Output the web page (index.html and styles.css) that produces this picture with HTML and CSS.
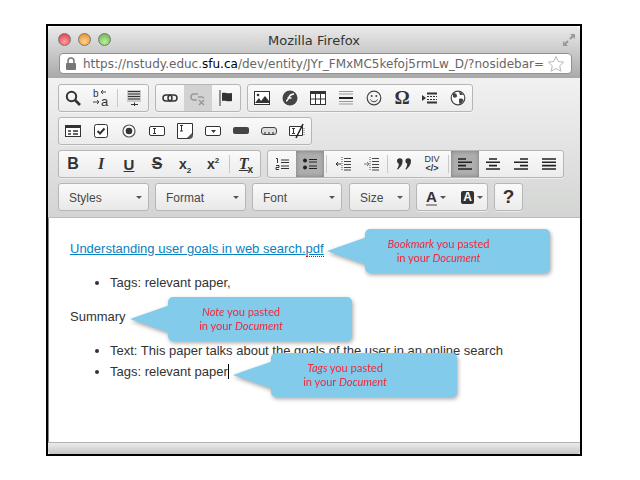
FILE: index.html
```html
<!DOCTYPE html>
<html lang="en">
<head>
    <meta charset="UTF-8">
    <title>Mozilla Firefox</title>
    <link rel="stylesheet" href="styles.css">
</head>
<body>

    <div class="window">
        <div class="chrome">
            <div class="titlebar">
                <div class="lights">
                    <span class="light red"></span>
                    <span class="light orange"></span>
                    <span class="light green"></span>
                </div>
                <span class="title">Mozilla Firefox</span>
                <svg class="resize" width="16" height="16" viewBox="0 0 16 16"><path d="M9 2h5v5l-1.700-1.700-2.500 2.500-1.600-1.600 2.500-2.500zM7 14H2V9l1.700 1.700 2.500-2.500 1.600 1.600-2.500 2.500z" fill="#9a9a9a"/></svg>
            </div>
            <div class="urlbar">
                <svg class="lock" width="12" height="14" viewBox="0 0 12 14"><path d="M3 6V4a3 3 0 0 1 6 0v2" fill="none" stroke="#777" stroke-width="1.500"/><rect x="1" y="6" width="10" height="7" rx="1" fill="#777"/></svg>
                <span class="url">https://nstudy.educ.<b>sfu.ca</b>/dev/entity/JYr_FMxMC5kefoj5rmLw_D/?nosidebar=</span>
                <svg width="18" height="18" viewBox="0 0 18 18"><path d="M9 1.500l2.300 5 5.400.6-4 3.700 1.100 5.400L9 13.500l-4.800 2.700 1.100-5.400-4-3.700 5.400-.6z" fill="#fff" stroke="#b8b8b8"/></svg>
            </div>
        </div>

        <div class="toolbar">
            <div class="row">
                <div class="group">
                    <span class="btn"><svg width="18" height="18" viewBox="0 0 18 18"><circle cx="7.500" cy="7.500" r="4.700" fill="none" stroke="#333" stroke-width="2"/><path d="M11 11l5 5" stroke="#333" stroke-width="2.600"/></svg></span>
                    <span class="btn"><svg width="18" height="20" viewBox="0 0 18 20"><text x="1" y="9" class="svg-text">b</text><text x="9" y="18" class="svg-text big">a</text><path d="M9 4h5M11 2L9 4l2 2M1 14h6M5 12l2 2-2 2" fill="none" stroke="#444"/></svg></span>
                    <span class="sep"></span>
                    <span class="btn"><svg width="16" height="18" viewBox="0 0 16 18"><rect x="1" y="1" width="14" height="12" fill="#ccc"/><path d="M2 2.500h12M2 5h12M2 7.500h12M2 10h12" stroke="#333" stroke-width="1.200"/><path d="M5 15.500h7M8.500 13.500v3.500" stroke="#333"/></svg></span>
                </div>
                <div class="group">
                    <span class="btn"><svg width="16" height="16" viewBox="0 0 16 16"><rect x="1" y="5" width="9" height="6" rx="3" fill="none" stroke="#333" stroke-width="1.500"/><rect x="6" y="5" width="9" height="6" rx="3" fill="none" stroke="#333" stroke-width="1.500"/></svg></span>
                    <span class="btn on light-on"><svg width="16" height="16" viewBox="0 0 16 16"><path d="M8 4H4a3 3 0 0 0 0 6h3M8 7h4a3 3 0 0 1 2 1" fill="none" stroke="#999" stroke-width="1.500"/><path d="M9 10l5 5M14 10l-5 5" stroke="#999" stroke-width="1.500"/></svg></span>
                    <span class="btn"><svg width="16" height="16" viewBox="0 0 16 16"><path d="M2 0v16" stroke="#333"/><path d="M4 3c3-1 5 1 10 0v8c-5 1-7-1-10 0z" fill="#333"/></svg></span>
                </div>
                <div class="group">
                    <span class="btn"><svg width="16" height="14" viewBox="0 0 16 14"><rect x=".5" y=".5" width="15" height="13" fill="#fff" stroke="#333"/><circle cx="4" cy="4" r="1.300" fill="#333"/><path d="M1 12l4-5 2 3 4-5 4 5v2H1z" fill="#333"/></svg></span>
                    <span class="btn"><svg width="16" height="16" viewBox="0 0 16 16"><circle cx="8" cy="8" r="7.500" fill="#444"/><path d="M4 11c2 0 2-2 3-4s2-3 5-3M5.500 8h4" fill="none" stroke="#fff" stroke-width="1.500"/></svg></span>
                    <span class="btn"><svg width="16" height="14" viewBox="0 0 16 14"><rect x=".5" y=".5" width="15" height="13" fill="#fff" stroke="#333"/><rect x="0" y="0" width="16" height="3" fill="#333"/><path d="M5.500 3v10M10.500 3v10M1 8h14" stroke="#333"/></svg></span>
                    <span class="btn"><svg width="14" height="16" viewBox="0 0 14 16"><path d="M0 1.500h14M0 4h14M0 11.500h14M0 14h14" stroke="#999"/><path d="M0 8h14" stroke="#222" stroke-width="2"/></svg></span>
                    <span class="btn"><svg width="16" height="16" viewBox="0 0 16 16"><circle cx="8" cy="8" r="6.800" fill="none" stroke="#444" stroke-width="1.200"/><circle cx="5.700" cy="6" r="1" fill="#444"/><circle cx="10.300" cy="6" r="1" fill="#444"/><path d="M4.500 9.500c1.500 3 5.500 3 7 0" fill="none" stroke="#444"/></svg></span>
                    <span class="btn omega">Ω</span>
                    <span class="btn"><svg width="16" height="12" viewBox="0 0 16 12"><path d="M0 3l4 3-4 3z" fill="#333"/><path d="M5 1.500h10M5 10.500h10" stroke="#333" stroke-width="2"/><path d="M5 4.500h10M5 7.500h10" stroke="#333" stroke-dasharray="2 1"/></svg></span>
                    <span class="btn"><svg width="16" height="16" viewBox="0 0 16 16"><circle cx="8" cy="8" r="6.800" fill="#fff" stroke="#444" stroke-width="1.200"/><path d="M3 3c3 0 4 1 4 3S4 8 3 7zM9 9c3-1 5 0 4 2s-2 3-3 3-1-3-1-5zM9 2c2 0 3 1 4 3l-3 0z" fill="#444"/></svg></span>
                </div>
            </div>

            <div class="row">
                <div class="group">
                    <span class="btn"><svg width="16" height="12" viewBox="0 0 16 12"><rect x=".5" y=".5" width="15" height="11" fill="#fff" stroke="#333"/><rect x="0" y="0" width="16" height="3" fill="#333"/><path d="M3 6h3M3 9h3M8 6h5M8 9h5" stroke="#333" stroke-width="1.300"/></svg></span>
                    <span class="btn"><svg width="14" height="14" viewBox="0 0 14 14"><rect x=".5" y=".5" width="13" height="13" rx="2" fill="#fff" stroke="#333"/><path d="M3.500 7l2.500 2.500 4.500-5" fill="none" stroke="#333" stroke-width="2"/></svg></span>
                    <span class="btn"><svg width="14" height="14" viewBox="0 0 14 14"><circle cx="7" cy="7" r="6" fill="#fff" stroke="#555" stroke-width="1.200"/><circle cx="7" cy="7" r="3.300" fill="#333"/></svg></span>
                    <span class="btn"><svg width="16" height="12" viewBox="0 0 16 12"><rect x=".5" y="1.500" width="15" height="9" rx="1.500" fill="#fff" stroke="#333"/><path d="M4 3.500h3M4 8.500h3M5.500 3.500v5" stroke="#333"/></svg></span>
                    <span class="btn"><svg width="16" height="16" viewBox="0 0 16 16"><path d="M.5.500h15v12a3 3 0 0 1-3 3H.5z" fill="#fff" stroke="#333"/><path d="M3 2.500h3M3 8h3M4.500 2.500V8" stroke="#333"/><path d="M15 10v5h-5z" fill="#555"/></svg></span>
                    <span class="btn"><svg width="16" height="12" viewBox="0 0 16 12"><rect x=".5" y="1.500" width="15" height="9" rx="1.500" fill="#fff" stroke="#333"/><path d="M6 5h5l-2.500 3z" fill="#333"/></svg></span>
                    <span class="btn"><svg width="16" height="8" viewBox="0 0 16 8"><rect x="0" y="0" width="16" height="7" rx="2" fill="#444"/></svg></span>
                    <span class="btn"><svg width="16" height="10" viewBox="0 0 16 10"><rect x=".5" y="1.500" width="15" height="7" rx="2.500" fill="#ddd" stroke="#444"/><path d="M3 7h2M7 7h2M11 7h2" stroke="#222"/></svg></span>
                    <span class="btn"><svg width="16" height="16" viewBox="0 0 16 16"><path d="M.5 3.500h13v9H.5z" fill="#fff" stroke="#333"/><path d="M3 5.500h3M3 10.500h3M4.500 5.500v5" stroke="#333"/><path d="M14 1L7 15" stroke="#222" stroke-width="1.500"/><path d="M15 5v8" stroke="#777" stroke-dasharray="1 1"/></svg></span>
                </div>
            </div>

            <div class="row">
                <div class="group">
                    <span class="btn fmt bold">B</span>
                    <span class="btn fmt italic">I</span>
                    <span class="btn fmt under">U</span>
                    <span class="btn fmt strike">S</span>
                    <span class="btn fmt script"><span>x<sub>2</sub></span></span>
                    <span class="btn fmt script"><span>x<sup>2</sup></span></span>
                    <span class="sep"></span>
                    <span class="btn fmt clear"><span><i>T</i><sub>x</sub></span></span>
                </div>
                <div class="group">
                    <span class="btn"><svg width="14" height="14" viewBox="0 0 14 14"><path d="M1 1.500h1.500V6M1 8.500h3v2H1v2h3" fill="none" stroke="#333"/><path d="M6 3h8M6 5.500h8M6 9h8M6 11.500h8" stroke="#333" stroke-width="1.200"/></svg></span>
                    <span class="btn on"><svg width="14" height="14" viewBox="0 0 14 14"><circle cx="2" cy="3.500" r="2" fill="#222"/><circle cx="2" cy="10.500" r="2" fill="#222"/><path d="M6 2.500h8M6 5h8M6 9h8M6 11.500h8" stroke="#222" stroke-width="1.200"/></svg></span>
                    <span class="sep"></span>
                    <span class="btn"><svg width="16" height="14" viewBox="0 0 16 14"><path d="M9 1.500h7M9 4.500h7M9 7.500h7M9 10.500h7M9 13h7" stroke="#444"/><path d="M7 0v14" stroke="#555" stroke-dasharray="1 1"/><path d="M1 7h5M1 7l2-2M1 7l2 2" fill="none" stroke="#333"/></svg></span>
                    <span class="btn"><svg width="16" height="14" viewBox="0 0 16 14"><path d="M9 1.500h7M9 4.500h7M9 7.500h7M9 10.500h7M9 13h7" stroke="#444"/><path d="M7 0v14" stroke="#555" stroke-dasharray="1 1"/><path d="M1 7h5M6 7L4 5M6 7L4 9" fill="none" stroke="#777"/></svg></span>
                    <span class="sep"></span>
                    <span class="btn"><svg width="16" height="12" viewBox="0 0 16 12"><path d="M1 3a2.800 2.800 0 1 1 5.600 0c0 3.500-2 6-4.600 8.500L1 11c1.200-1.800 1.800-3.500 1.800-5.300A2.800 2.800 0 0 1 1 3zM9.400 3a2.800 2.800 0 1 1 5.600 0c0 3.500-2 6-4.600 8.500l-1-.5c1.200-1.800 1.800-3.500 1.800-5.300A2.800 2.800 0 0 1 9.400 3z" fill="#333"/></svg></span>
                    <span class="btn div-btn"><span>DIV</span><span class="div-tag">&lt;/&gt;</span></span>
                    <span class="sep"></span>
                    <span class="btn on"><svg width="14" height="12" viewBox="0 0 14 12"><path d="M0 1h8M0 4.300h14M0 7.600h8M0 11h14" stroke="#222" stroke-width="1.600"/></svg></span>
                    <span class="btn"><svg width="14" height="12" viewBox="0 0 14 12"><path d="M3 1h8M0 4.300h14M3 7.600h8M0 11h14" stroke="#222" stroke-width="1.600"/></svg></span>
                    <span class="btn"><svg width="14" height="12" viewBox="0 0 14 12"><path d="M6 1h8M0 4.300h14M6 7.600h8M0 11h14" stroke="#222" stroke-width="1.600"/></svg></span>
                    <span class="btn"><svg width="14" height="12" viewBox="0 0 14 12"><path d="M0 1h14M0 4.300h14M0 7.600h14M0 11h14" stroke="#222" stroke-width="1.600"/></svg></span>
                </div>
            </div>

            <div class="row">
                <div class="combo styles">Styles<span class="arrow"></span></div>
                <div class="combo format">Format<span class="arrow"></span></div>
                <div class="combo font">Font<span class="arrow"></span></div>
                <div class="combo size">Size<span class="arrow"></span></div>
                <div class="group colors">
                    <span class="color-btn"><span class="letter-a">A</span><span class="arrow"></span></span>
                    <span class="color-btn"><span class="letter-box">A</span><span class="arrow"></span></span>
                </div>
                <div class="group help">?</div>
            </div>
        </div>

        <div class="content">
            <p><a href="#">Understanding user goals in web search.<span class="spell">pdf</span></a></p>
            <ul>
                <li>Tags: relevant paper,</li>
            </ul>
            <p>Summary</p>
            <ul>
                <li>Text: This paper talks about the goals of the user in an online search</li>
                <li>Tags: relevant paper<span class="cursor"></span></li>
            </ul>
        </div>

        <div class="statusbar"></div>

        <div class="callout bookmark"><i>Bookmark</i> you pasted<br>in your <i>Document</i></div>
        <div class="callout note"><i>Note</i> you pasted<br>in your <i>Document</i></div>
        <div class="callout tags"><i>Tags</i> you pasted<br>in your <i>Document</i></div>
    </div>

</body>
</html>
```

FILE: styles.css
```css
body {
    margin: 0;
    padding: 24px 0 0 46px;
    background: white;
    font-family: "Liberation Sans", Arial, sans-serif;
}

.window {
    position: relative;
    z-index: 0;
    box-sizing: border-box;
    width: 536px;
    height: 432px;
    border: 2px solid black;
    display: flex;
    flex-direction: column;
    background: white;
}

/* browser chrome */
.chrome {
    height: 52px;
    background: linear-gradient(#e9e9e9, #a9a9a9);
    border-radius: 5px 5px 0 0;
    border-top: 1px solid #f2f2f2;
    box-sizing: border-box;
}

.titlebar {
    height: 26px;
    position: relative;
    display: flex;
    align-items: center;
    justify-content: center;
}

.lights {
    position: absolute;
    left: 10px;
    top: 6px;
    display: flex;
    gap: 7px;
}

.light {
    width: 13px;
    height: 13px;
    border-radius: 50%;
    border: 1px solid #777;
    box-sizing: border-box;
}

.red { background: radial-gradient(circle at 50% 70%, #f9a0a0, #dc3240); }
.orange { background: radial-gradient(circle at 50% 70%, #fcd48c, #de8a25); }
.green { background: radial-gradient(circle at 50% 70%, #bdeea0, #62ab45); }

.title {
    font-family: "DejaVu Sans", sans-serif;
    font-size: 13px;
    color: #333;
}

.resize {
    position: absolute;
    right: 3px;
    top: 5px;
}

.urlbar {
    box-sizing: border-box;
    height: 21px;
    margin: 0 8px 0 11px;
    padding: 0 6px 0 5px;
    display: flex;
    align-items: center;
    gap: 3px;
    background: white;
    border: 1px solid #8f8f8f;
    border-radius: 4px;
}

.lock {
    margin-right: 3px;
}

.url {
    flex: 1;
    white-space: nowrap;
    font-family: "DejaVu Sans", sans-serif;
    font-size: 12px;
    color: #666;
}

.url b {
    font-weight: normal;
    color: black;
}

/* editor toolbar */
.toolbar {
    height: 140px;
    box-sizing: border-box;
    padding: 6px 0 0 10px;
    display: flex;
    flex-direction: column;
    gap: 5px;
    background: linear-gradient(#f1f1f1, #d3d5d3);
    border-bottom: 1px solid #bbb;
}

.row {
    display: flex;
    gap: 6px;
    height: 28px;
}

.group {
    box-sizing: border-box;
    height: 28px;
    display: flex;
    border: 1px solid #b6b6b6;
    border-radius: 3px;
    background: linear-gradient(#fafafa, #ececec);
    box-shadow: 0 1px 0 rgba(255, 255, 255, 0.5);
    overflow: hidden;
}

.btn {
    width: 28px;
    height: 26px;
    display: flex;
    align-items: center;
    justify-content: center;
    color: #333;
}

.btn.on {
    background: #aeaeae;
    box-shadow: inset 0 0 4px rgba(0, 0, 0, 0.3);
}

.btn.light-on {
    background: #d2d2d2;
    box-shadow: none;
}

.sep {
    width: 1px;
    margin: 4px 2px;
    background: #c8c8c8;
}

.svg-text {
    font-family: "Liberation Sans", Arial, sans-serif;
    font-size: 10px;
    fill: #333;
}

.svg-text.big {
    font-size: 13px;
}

.omega {
    font-family: "Liberation Serif", serif;
    font-size: 19px;
    font-weight: bold;
}

.fmt {
    font-size: 16px;
    font-weight: bold;
}

.italic {
    font-family: "Liberation Serif", serif;
    font-style: italic;
}

.under {
    text-decoration: underline;
    font-size: 15px;
}

.strike {
    text-decoration: line-through;
}

.script {
    font-size: 14px;
}

.script sub, .script sup {
    font-size: 8px;
    line-height: 0;
}

.clear {
    font-family: "Liberation Serif", serif;
}

.clear i {
    text-decoration: underline;
}

.clear sub {
    font-family: "Liberation Sans", Arial, sans-serif;
    font-size: 10px;
    line-height: 0;
    margin-left: -1px;
}

.div-btn {
    flex-direction: column;
    font-size: 9px;
    line-height: 9px;
}

.div-tag {
    font-weight: bold;
}

.combo {
    box-sizing: border-box;
    height: 28px;
    padding: 1px 0 0 10px;
    display: flex;
    align-items: center;
    justify-content: space-between;
    font-size: 12px;
    color: #484848;
    border: 1px solid #b6b6b6;
    border-radius: 3px;
    background: linear-gradient(#fafafa, #e8e8e8);
}

.combo .arrow {
    margin-right: 6px;
}

.styles, .format { width: 91px; }
.font { width: 90px; }
.size { width: 61px; margin-left: 1px; }

.arrow {
    width: 0;
    height: 0;
    border-left: 3px solid transparent;
    border-right: 3px solid transparent;
    border-top: 3px solid #555;
}

.colors {
    width: 72px;
    align-items: center;
}

.color-btn {
    width: 35px;
    padding-left: 9px;
    box-sizing: border-box;
    display: flex;
    align-items: center;
    gap: 3px;
}

.letter-a {
    font-size: 15px;
    font-weight: bold;
    color: #333;
    border-bottom: 2px solid #999;
    line-height: 15px;
}

.letter-box {
    width: 13px;
    height: 13px;
    background: #333;
    color: white;
    border-radius: 2px;
    font-size: 12px;
    line-height: 13px;
    font-weight: bold;
    text-align: center;
}

.help {
    width: 29px;
    align-items: center;
    justify-content: center;
    font-size: 19px;
    font-weight: bold;
    color: #333;
}

/* document */
.content {
    flex: 1;
    padding: 20px 20px 0 21px;
    font-size: 13px;
    line-height: 21px;
    color: #333;
    border-left: 1px solid #888;
}

.content p, .content ul {
    margin: 13px 0;
}

.content p:first-child {
    margin-top: 0;
}

.content ul {
    padding-left: 40px;
}

.content a {
    color: #0782c1;
}

.spell {
    border-bottom: 1px dotted #e00000;
}

.cursor {
    display: inline-block;
    width: 1px;
    height: 15px;
    background: black;
    vertical-align: -3px;
}

.statusbar {
    height: 12px;
    background: linear-gradient(#ececec, #c4c4c4);
    border-top: 1px solid #b0b0b0;
    box-sizing: border-box;
    border-radius: 0 0 3px 3px;
}

/* pasted note callouts, drawn over the page */
.callout {
    position: absolute;
    z-index: 1;
    box-sizing: border-box;
    height: 44px;
    padding-top: 8px;
    font-family: Lato, sans-serif;
    font-size: 11px;
    line-height: 14px;
    text-align: center;
    color: #f2283c;
    filter: drop-shadow(1px 2px 2px rgba(0, 0, 0, 0.35));
}

.callout::before {
    content: "";
    position: absolute;
    z-index: -1;
    left: 38px;
    right: 0;
    top: 0;
    bottom: 0;
    background: #82cbea;
    border-radius: 5px;
}

.callout::after {
    content: "";
    position: absolute;
    z-index: -1;
    left: 0;
    top: 8px;
    width: 40px;
    height: 28px;
    background: #82cbea;
    clip-path: polygon(0 50%, 100% 0, 100% 100%);
}

.bookmark {
    left: 279px;
    top: 203px;
    width: 223px;
}

.note {
    left: 82px;
    top: 271px;
    width: 222px;
}

.tags {
    left: 185px;
    top: 327px;
    width: 224px;
}
```
